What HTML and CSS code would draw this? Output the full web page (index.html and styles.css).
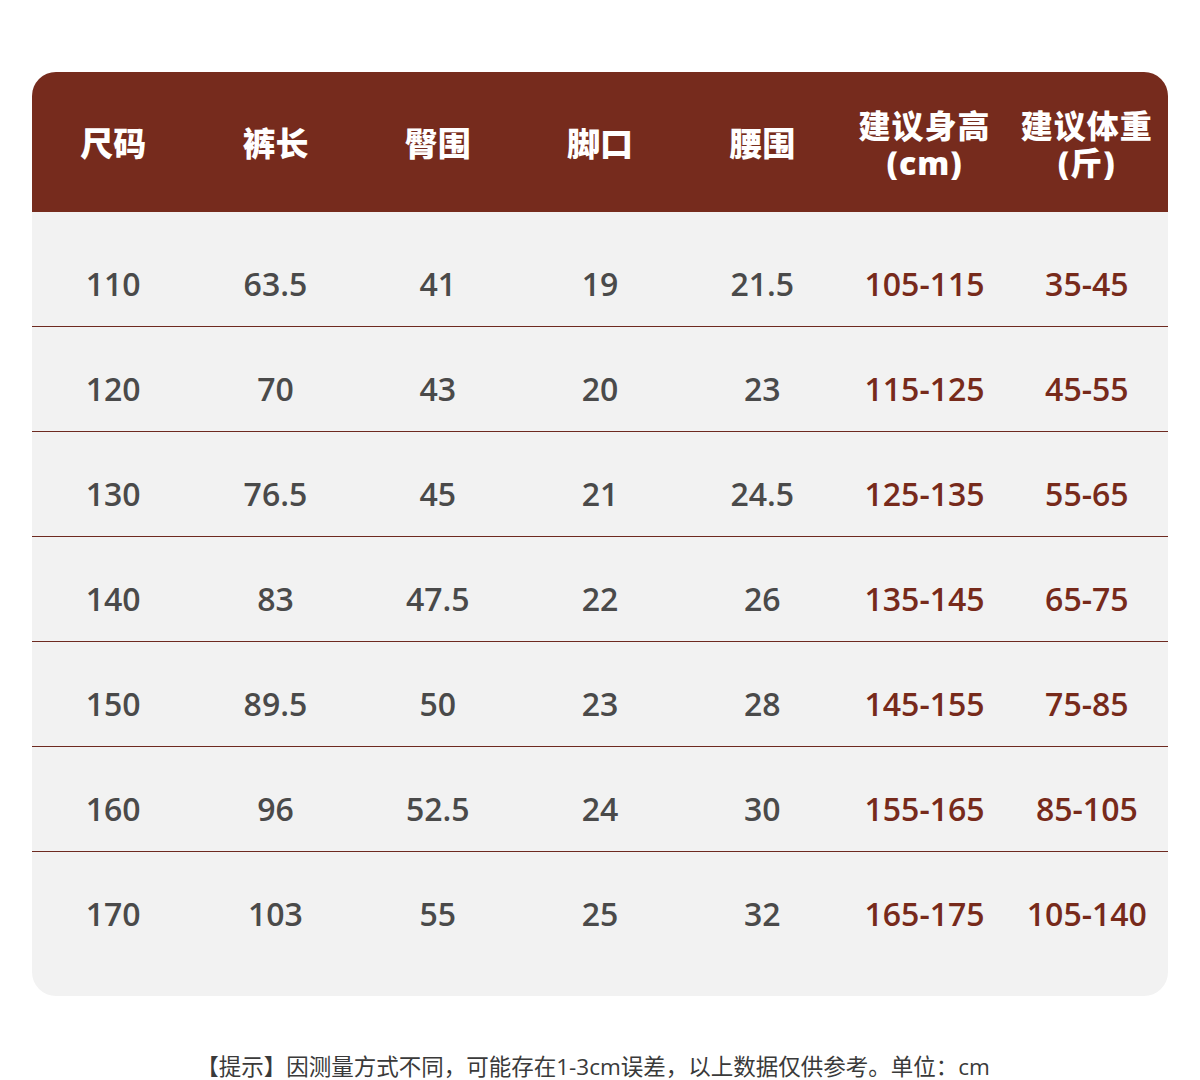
FILE: index.html
```html
<!DOCTYPE html>
<html lang="zh">
<head>
<meta charset="utf-8">
<title>尺码表</title>
<link rel="stylesheet" href="styles.css">
</head>
<body>
<div class="page">
  <div class="chart">
    <div class="head">
      <div class="hc">尺码</div>
      <div class="hc">裤长</div>
      <div class="hc">臀围</div>
      <div class="hc">脚口</div>
      <div class="hc">腰围</div>
      <div class="hc two"><span class="l1">建议身高</span><span class="l2">(cm)</span></div>
      <div class="hc two"><span class="l1">建议体重</span><span class="l2">(斤)</span></div>
    </div>
    <div class="body">
      <div class="row"><div class="c">110</div><div class="c">63.5</div><div class="c">41</div><div class="c">19</div><div class="c">21.5</div><div class="c red">105-115</div><div class="c red">35-45</div></div>
      <div class="row"><div class="c">120</div><div class="c">70</div><div class="c">43</div><div class="c">20</div><div class="c">23</div><div class="c red">115-125</div><div class="c red">45-55</div></div>
      <div class="row"><div class="c">130</div><div class="c">76.5</div><div class="c">45</div><div class="c">21</div><div class="c">24.5</div><div class="c red">125-135</div><div class="c red">55-65</div></div>
      <div class="row"><div class="c">140</div><div class="c">83</div><div class="c">47.5</div><div class="c">22</div><div class="c">26</div><div class="c red">135-145</div><div class="c red">65-75</div></div>
      <div class="row"><div class="c">150</div><div class="c">89.5</div><div class="c">50</div><div class="c">23</div><div class="c">28</div><div class="c red">145-155</div><div class="c red">75-85</div></div>
      <div class="row"><div class="c">160</div><div class="c">96</div><div class="c">52.5</div><div class="c">24</div><div class="c">30</div><div class="c red">155-165</div><div class="c red">85-105</div></div>
      <div class="row last"><div class="c">170</div><div class="c">103</div><div class="c">55</div><div class="c">25</div><div class="c">32</div><div class="c red">165-175</div><div class="c red">105-140</div></div>
    </div>
  </div>
  <p class="note">【提示】因测量方式不同，可能存在1-3cm误差，以上数据仅供参考。单位：cm</p>
</div>
</body>
</html>
```
FILE: styles.css
```css
html, body {
  margin: 0;
  padding: 0;
  background: #ffffff;
}
.page {
  width: 1200px;
  padding-top: 72px;
  box-sizing: border-box;
}
.chart {
  margin: 0 32px;
  width: 1136px;
  border-radius: 24px;
  overflow: hidden;
  background: #f2f2f2;
}
.head {
  display: grid;
  grid-template-columns: repeat(7, 1fr);
  height: 140px;
  background: #762b1d;
  align-items: center;
  padding-top: 4px;
  box-sizing: border-box;
}
.hc {
  text-align: center;
  color: #ffffff;
  font-family: "Open Sans", "Noto Sans CJK SC", sans-serif;
  font-weight: 800;
  font-size: 33px;
  line-height: 36px;
}
.hc.two {
  display: flex;
  flex-direction: column;
  align-items: center;
  font-size: 32px;
  line-height: 37px;
  letter-spacing: 1px;
}
.l1, .l2 {
  display: block;
}
.body {
  padding: 10px 0 39px;
}
.row {
  display: grid;
  grid-template-columns: repeat(7, 1fr);
  height: 105px;
  box-sizing: border-box;
  border-bottom: 1px solid #6e2a20;
  padding-top: 21px;
}
.row.last {
  border-bottom: none;
}
.c {
  text-align: center;
  font-family: "Open Sans", "Noto Sans", sans-serif;
  font-weight: 600;
  font-size: 32px;
  line-height: 82px;
  height: 84px;
  color: #4a4a4a;
}
.c.red {
  color: #772a1b;
}
.note {
  margin: 59px 0 0;
  text-align: center;
  font-family: "Open Sans", "Noto Sans CJK SC", sans-serif;
  font-size: 22.5px;
  font-weight: 400;
  line-height: 24px;
  color: #3a3a3a;
  padding-right: 14px;
}
```
